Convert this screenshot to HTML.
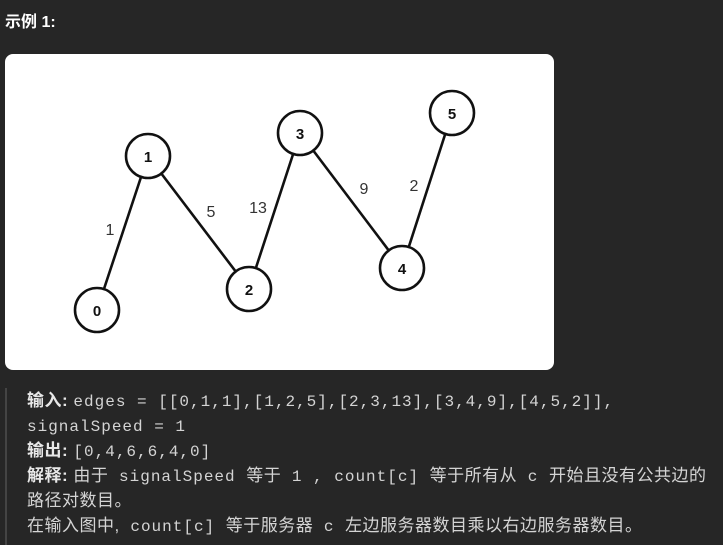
<!DOCTYPE html>
<html><head><meta charset="utf-8"><style>
body{margin:0;width:723px;height:545px;background:#262626;overflow:hidden;font-family:"Liberation Sans","Noto Sans CJK SC",sans-serif;color:#e6e6e6}
.t{position:absolute;left:5px;top:8px;font-size:16px;font-weight:bold;color:#fff}
.img{position:absolute;left:5px;top:54px;width:549px;height:316px;background:#fff;border-radius:8px}
.bq{position:absolute;left:5px;top:388px;height:157px;border-left:2px solid #444;padding-left:20px;font-size:17px;letter-spacing:0.5px;color:#d4d4d4;white-space:pre}
.bq div{height:25px;line-height:25px;overflow:visible}
.m{font-family:"Liberation Mono","Noto Sans CJK SC",monospace;font-size:16px;letter-spacing:1px;line-height:1}
b{color:#e8e8e8}
</style></head><body>
<div class="t">示例 1:</div>
<div class="img"><svg width="549" height="316" viewBox="5 54 549 316">
<g stroke="#111" stroke-width="2.6" fill="none">
<line x1="97" y1="310" x2="148" y2="156"/><line x1="148" y1="156" x2="249" y2="289"/>
<line x1="249" y1="289" x2="300" y2="133"/><line x1="300" y1="133" x2="402" y2="268"/>
<line x1="402" y1="268" x2="452" y2="113"/>
<g fill="#fff"><circle cx="97" cy="310" r="22"/><circle cx="148" cy="156" r="22"/><circle cx="249" cy="289" r="22"/><circle cx="300" cy="133" r="22"/><circle cx="402" cy="268" r="22"/><circle cx="452" cy="113" r="22"/></g>
</g>
<g font-family="Liberation Sans" font-size="15" font-weight="bold" text-anchor="middle" fill="#111">
<text x="97" y="316">0</text><text x="148" y="162">1</text><text x="249" y="295">2</text><text x="300" y="139">3</text><text x="402" y="274">4</text><text x="452" y="119">5</text></g>
<g font-family="Liberation Sans" font-size="16" fill="#333" text-anchor="middle">
<text x="110" y="235">1</text><text x="211" y="217">5</text><text x="258" y="213">13</text><text x="364" y="194">9</text><text x="414" y="191">2</text></g>
</svg></div>
<div class="bq"><div><b>输入:</b> <span class="m">edges = [[0,1,1],[1,2,5],[2,3,13],[3,4,9],[4,5,2]],</span></div><div><span class="m">signalSpeed = 1</span></div><div><b>输出:</b> <span class="m">[0,4,6,6,4,0]</span></div><div><b>解释:</b> 由于<span class="m"> signalSpeed </span>等于<span class="m"> 1 , count[c] </span>等于所有从<span class="m"> c </span>开始且没有公共边的</div><div>路径对数目。</div><div>在输入图中,<span class="m"> count[c] </span>等于服务器<span class="m"> c </span>左边服务器数目乘以右边服务器数目。</div></div>
</body></html>
